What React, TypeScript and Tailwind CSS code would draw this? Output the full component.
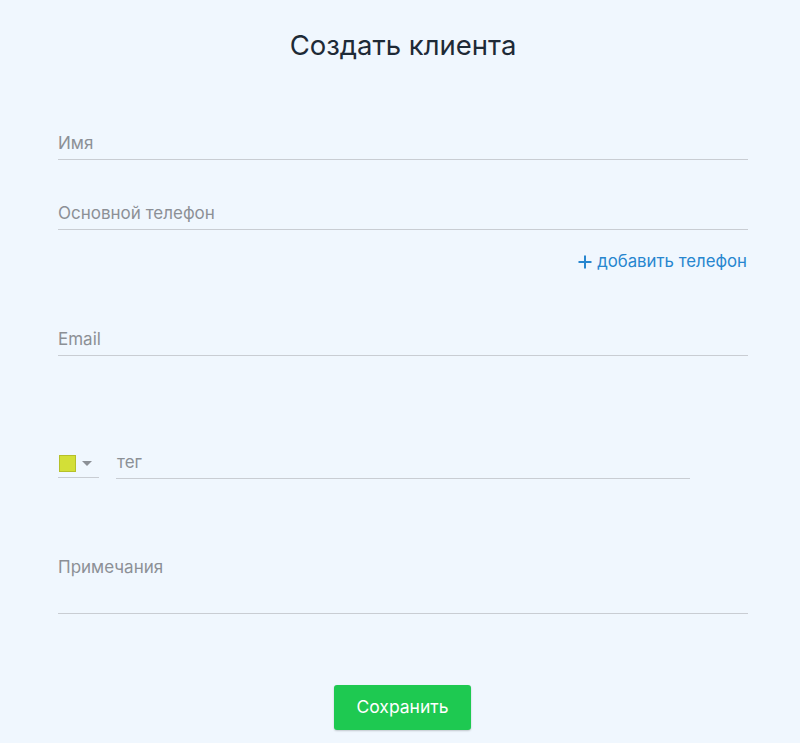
import React from "react";

function Field({ label, className = "" }: { label: string; className?: string }) {
  return (
    <div className={`border-b border-[#c9cdd3] pb-[4px] text-[17px] leading-6 text-[#8c9096] ${className}`}>
      {label}
    </div>
  );
}

export default function App() {
  return (
    <div className="min-h-[743px] w-full bg-[#f0f7fe] font-['Inter','Noto_Sans',sans-serif] pl-[58px] pr-[52px] pt-[29px] pb-[13px]">
      <h1 className="text-center text-[27.5px] leading-8 text-[#1e2a36]">Создать клиента</h1>

      <Field label="Имя" className="mt-[70px]" />
      <Field label="Основной телефон" className="mt-[41px]" />

      <div className="mt-[19px] flex justify-end">
        <button className="flex items-center gap-[5px] text-[16.8px] leading-6 text-[#2786cf] pr-[1px]">
          <svg width="14" height="14" viewBox="0 0 14 14" className="mt-[1px]">
            <path d="M7 0.5v13M0.5 7h13" stroke="#2786cf" strokeWidth="2" />
          </svg>
          добавить телефон
        </button>
      </div>

      <Field label="Email" className="mt-[54px]" />

      <div className="mt-[94px] flex items-start">
        <div className="w-[41px] border-b border-[#c9cdd3] h-[28px] flex items-center pl-[1px]">
          <span className="block w-[17px] h-[17px] bg-[#d3df37] border border-[#b5c02a]" />
          <svg width="10" height="6" viewBox="0 0 10 6" className="ml-[6px]">
            <path d="M0 0h10L5 5z" fill="#8c9096" />
          </svg>
        </div>
        <div className="ml-[17px] w-[574px] border-b border-[#c9cdd3] pb-[4px] text-[17px] leading-6 text-[#8c9096] pl-[1px]">
          тег
        </div>
      </div>

      <Field label="Примечания" className="mt-[76px] pb-[34px]" />

      <div className="mt-[71px] flex justify-center">
        <button className="w-[137px] h-[45px] rounded-[3px] bg-[#1ec951] text-white text-[17.5px] shadow-[0_1px_2px_rgba(0,0,0,0.2)] mr-[1px]">
          Сохранить
        </button>
      </div>
    </div>
  );
}
